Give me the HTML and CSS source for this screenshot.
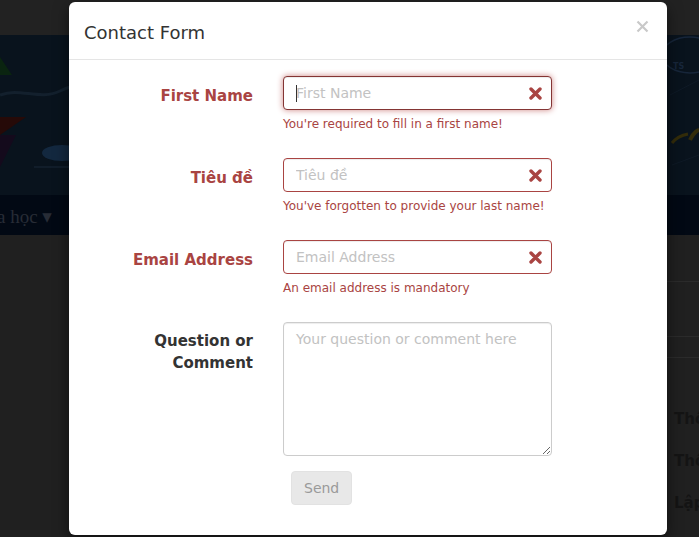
FILE: index.html
```html
<!DOCTYPE html>
<html lang="vi">
<head>
<meta charset="utf-8">
<title>Contact Form</title>
<link rel="stylesheet" href="styles.css">
</head>
<body>
<div class="page">
  <div class="topbar"></div>
  <div class="banner">
    <svg class="banner-art" width="699" height="160" viewBox="0 0 699 160">
      <polygon points="0,22 12,40 0,40" fill="#0a2410"/>
      <path d="M0,60 C20,52 40,66 60,56 S90,50 110,60" stroke="#13202d" stroke-width="3" fill="none"/>
      <polygon points="0,82 26,82 0,100" fill="#260a08"/>
      <polygon points="0,100 16,100 0,132" fill="#140a1c"/>
      <ellipse cx="62" cy="118" rx="20" ry="8" fill="#13283f"/>
      <rect x="34" y="131" width="38" height="2" fill="#111d2a"/>
      <ellipse cx="690" cy="20" rx="28" ry="18" stroke="#17263a" stroke-width="1.5" fill="none"/>
      <text x="673" y="34" fill="#17263a" font-family="DejaVu Sans" font-weight="bold" font-size="8">TS</text>
      <path d="M672,108 C676,103 682,100 688,99" stroke="#332c0a" stroke-width="3" fill="none"/>
      <path d="M690,105 C694,96 699,95 699,95" stroke="#332c0a" stroke-width="4" fill="none"/>
      <line x1="670" y1="60" x2="699" y2="45" stroke="#0f1a26" stroke-width="1"/>
      <line x1="672" y1="130" x2="699" y2="120" stroke="#0f1a26" stroke-width="1"/>
    </svg>
  </div>
  <div class="nav"><span class="nav-item">a học ▾</span></div>
  <div class="content">
    <div class="main-col"></div>
    <div class="side-col">
      <div class="side-line first"></div>
      <div class="side-line second"></div>
      <div class="side-line third"></div>
      <ul class="side-list">
        <li>Thông báo</li>
        <li>Thông tin</li>
        <li>Lập trình</li>
      </ul>
    </div>
  </div>
</div>

<div class="modal">
  <div class="modal-header">
    <h4 class="modal-title">Contact Form</h4>
    <span class="close" aria-label="Close">
      <svg width="13" height="13" viewBox="0 0 13 13"><path d="M1.5,1.5 L11.5,11.5 M11.5,1.5 L1.5,11.5" stroke="#c9c9c9" stroke-width="2.2" fill="none"/></svg>
    </span>
  </div>
  <div class="modal-body">
    <div class="form-group has-error">
      <label class="control-label">First Name</label>
      <div class="control">
        <div class="input-wrap">
          <input class="form-control focused" type="text" placeholder="First Name">
          <span class="caret-mark"></span>
          <svg class="feedback" width="13" height="13" viewBox="0 0 13 13"><path d="M2,2 L11,11 M11,2 L2,11" stroke="#a94442" stroke-width="3.4" stroke-linecap="round" fill="none"/></svg>
        </div>
        <div class="help-block">You're required to fill in a first name!</div>
      </div>
    </div>
    <div class="form-group has-error">
      <label class="control-label">Tiêu đề</label>
      <div class="control">
        <div class="input-wrap">
          <input class="form-control" type="text" placeholder="Tiêu đề">
          <svg class="feedback" width="13" height="13" viewBox="0 0 13 13"><path d="M2,2 L11,11 M11,2 L2,11" stroke="#a94442" stroke-width="3.4" stroke-linecap="round" fill="none"/></svg>
        </div>
        <div class="help-block">You've forgotten to provide your last name!</div>
      </div>
    </div>
    <div class="form-group has-error">
      <label class="control-label">Email Address</label>
      <div class="control">
        <div class="input-wrap">
          <input class="form-control" type="text" placeholder="Email Address">
          <svg class="feedback" width="13" height="13" viewBox="0 0 13 13"><path d="M2,2 L11,11 M11,2 L2,11" stroke="#a94442" stroke-width="3.4" stroke-linecap="round" fill="none"/></svg>
        </div>
        <div class="help-block">An email address is mandatory</div>
      </div>
    </div>
    <div class="form-group">
      <label class="control-label">Question or<br>Comment</label>
      <div class="control">
        <textarea class="form-control textarea" placeholder="Your question or comment here"></textarea>
      </div>
    </div>
    <div class="form-group">
      <div class="label-spacer"></div>
      <div class="control">
        <button class="btn" type="button" disabled>Send</button>
      </div>
    </div>
  </div>
</div>
</body>
</html>
```

FILE: styles.css
```css
* { box-sizing: border-box; }
html, body { margin: 0; padding: 0; }
body {
  width: 699px;
  height: 537px;
  overflow: hidden;
  background: #202020;
  font-family: "DejaVu Sans", Verdana, sans-serif;
  font-size: 14px;
  color: #333;
  position: relative;
}
.page { width: 699px; }
.topbar { height: 35px; background: #222222; }
.banner { height: 160px; background: #09131d; overflow: hidden; }
.banner-art { display: block; }
.nav {
  height: 40px;
  background: #020914;
  display: flex;
  align-items: center;
}
.nav-item {
  font-family: "Liberation Serif", "DejaVu Serif", serif;
  font-size: 19px;
  color: #272c36;
  margin-left: -3px;
  padding-top: 2px;
}
.content { display: flex; height: 302px; }
.main-col { flex: 1; }
.side-col { width: 140px; position: relative; }
.side-line { height: 1px; background: #2b2b2b; }
.side-line.first { margin-top: 46px; }
.side-line.second { margin-top: 54px; }
.side-line.third { margin-top: 20px; }
.side-list {
  list-style: none;
  margin: 50px 0 0 0;
  padding: 0 0 0 115px;
  font-weight: bold;
  font-size: 15px;
  color: #141414;
  white-space: nowrap;
}
.side-list li { height: 42px; line-height: 22px; }

.modal {
  position: absolute;
  left: 69px;
  top: 2px;
  width: 598px;
  background: #fff;
  border-radius: 6px;
  box-shadow: 0 5px 15px rgba(0,0,0,.5);
}
.modal-header {
  position: relative;
  padding: 17px 15px 13px;
  border-bottom: 1px solid #e5e5e5;
}
.modal-title {
  margin: 0;
  font-size: 18px;
  font-weight: normal;
  line-height: 27px;
  color: #333;
}
.close {
  position: absolute;
  right: 18px;
  top: 18px;
  width: 13px;
  height: 13px;
  display: block;
}
.close svg { display: block; }
.modal-body { padding: 16px 15px 15px; }
.form-group { display: flex; margin-bottom: 15px; }
.control-label, .label-spacer {
  width: 199px;
  flex: none;
  padding: 8px 30px 0 0;
  text-align: right;
  font-weight: bold;
  font-size: 15px;
  line-height: 22px;
  color: #333;
}
.has-error .control-label { color: #a94442; padding-top: 9px; }
.control { width: 269px; flex: none; }
.input-wrap { position: relative; }
.form-control {
  display: block;
  width: 269px;
  height: 34px;
  padding: 6px 12px;
  font-family: "DejaVu Sans", Verdana, sans-serif;
  font-size: 14px;
  color: #555;
  background: #fff;
  border: 1px solid #ccc;
  border-radius: 4px;
  box-shadow: inset 0 1px 1px rgba(0,0,0,.075);
  outline: none;
}
.form-control::placeholder { color: #c2c2c2; opacity: 1; }
.has-error .form-control { border-color: #a94442; padding-right: 42px; }
.has-error .form-control.focused {
  border-color: #843534;
  box-shadow: inset 0 1px 1px rgba(0,0,0,.075), 0 0 6px #ce8483;
}
.caret-mark {
  position: absolute;
  left: 13px;
  top: 9px;
  width: 1px;
  height: 17px;
  background: #333;
}
.feedback {
  position: absolute;
  right: 10px;
  top: 11px;
}
.help-block {
  margin-top: 5px;
  margin-bottom: 10px;
  font-size: 12px;
  line-height: 18px;
  color: #a94442;
  white-space: nowrap;
}
.textarea {
  height: 134px;
  resize: vertical;
  line-height: 20px;
}
.btn {
  margin-left: 8px;
  height: 34px;
  padding: 6px 12px;
  font-family: "DejaVu Sans", Verdana, sans-serif;
  font-size: 14px;
  line-height: 20px;
  color: #9a9a9a;
  background: #e8e8e8;
  border: 1px solid #e2e2e2;
  border-radius: 4px;
}
```
